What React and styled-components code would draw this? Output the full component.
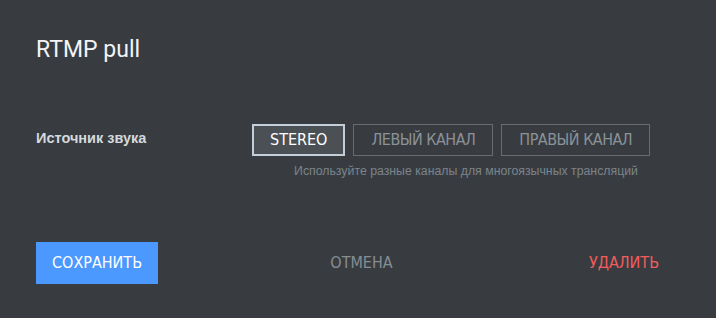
import React, { useState } from "react";
import styled, { createGlobalStyle } from "styled-components";

const Global = createGlobalStyle`
  html, body { margin: 0; padding: 0; background: #383c41; }
  body { width: 716px; height: 318px; overflow: hidden; }
`;

const Dialog = styled.div`
  box-sizing: border-box;
  width: 716px;
  height: 318px;
  background: #383c41;
  padding: 37px 36px 0 36px;
  display: flex;
  flex-direction: column;
`;

const Title = styled.h1`
  margin: 0;
  font-family: Roboto, "Noto Sans", sans-serif;
  font-weight: 400;
  font-size: 23px;
  line-height: 26px;
  color: #f2f4f6;
`;

const FieldRow = styled.div`
  margin-top: 61px;
  display: grid;
  grid-template-columns: 216px 1fr;
  align-items: start;
`;

const Label = styled.div`
  padding-top: 6px;
  font-family: "Liberation Sans", Arial, sans-serif;
  font-weight: 700;
  font-size: 14.5px;
  line-height: 16px;
  color: #d5d9dd;
`;

const Control = styled.div`
  display: flex;
  flex-direction: column;
  align-items: stretch;
`;

const Segments = styled.div`
  display: flex;
  gap: 8px;
`;

const Segment = styled.button`
  box-sizing: border-box;
  height: 32px;
  margin: 0;
  font-family: "DejaVu Sans Condensed", "DejaVu Sans", sans-serif;
  font-stretch: condensed;
  font-size: 16px;
  line-height: 18px;
  text-transform: uppercase;
  cursor: pointer;
  background: ${(p) => (p.$active ? "#4b5055" : "transparent")};
  color: ${(p) => (p.$active ? "#ffffff" : "#8b9298")};
  border: ${(p) => (p.$active ? "2px solid #c3ced8" : "1px solid #686d72")};
  padding: ${(p) => (p.$active ? "0 16px" : "0 17px")};
  letter-spacing: ${(p) => (p.$active ? "0" : "-0.5px")};
`;

const Hint = styled.div`
  margin-top: 8px;
  text-align: center;
  font-family: "Liberation Sans", Arial, sans-serif;
  font-size: 12.3px;
  line-height: 14px;
  color: #7c848b;
`;

const Footer = styled.div`
  margin-top: 64px;
  display: flex;
  justify-content: space-between;
  align-items: center;
  padding-right: 5px;
`;

const ActionButton = styled.button`
  box-sizing: border-box;
  height: 42px;
  margin: 0;
  padding: 0 16px;
  border: none;
  cursor: pointer;
  font-family: "DejaVu Sans Condensed", "DejaVu Sans", sans-serif;
  font-stretch: condensed;
  font-size: 16px;
  line-height: 18px;
  text-transform: uppercase;
  background: ${(p) => (p.$variant === "primary" ? "#4b98ff" : "transparent")};
  color: ${(p) =>
    p.$variant === "primary" ? "#ffffff" : p.$variant === "danger" ? "#f35c5c" : "#868d93"};
`;

const CancelButton = styled(ActionButton)`
  margin-right: 8px;
`;

const options = ["Stereo", "Левый канал", "Правый канал"];

export default function App() {
  const [active, setActive] = useState(0);
  return (
    <>
      <Global />
      <Dialog>
        <Title>RTMP pull</Title>
        <FieldRow>
          <Label>Источник звука</Label>
          <Control>
            <Segments>
              {options.map((o, i) => (
                <Segment key={o} $active={i === active} onClick={() => setActive(i)}>
                  {o}
                </Segment>
              ))}
            </Segments>
            <Hint>Используйте разные каналы для многоязычных трансляций</Hint>
          </Control>
        </FieldRow>
        <Footer>
          <ActionButton $variant="primary">Сохранить</ActionButton>
          <CancelButton>Отмена</CancelButton>
          <ActionButton $variant="danger">Удалить</ActionButton>
        </Footer>
      </Dialog>
    </>
  );
}
